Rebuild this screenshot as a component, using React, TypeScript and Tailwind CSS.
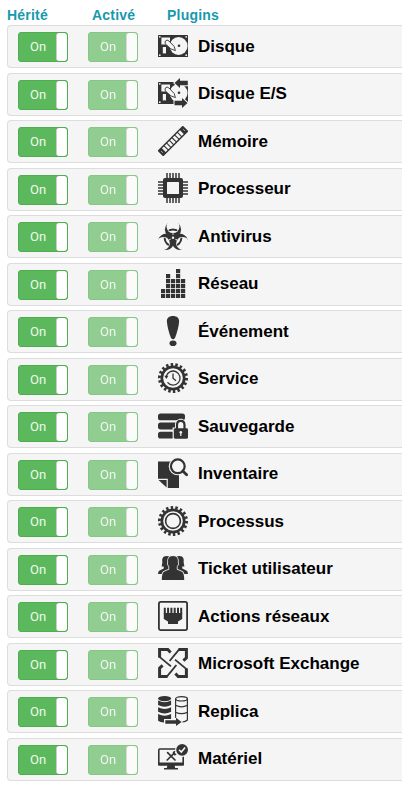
import type { ReactNode } from 'react'

const DARK = '#333'
const LIGHT = '#f5f5f5'

function Icon({ children }: { children: ReactNode }) {
  return (
    <svg viewBox="0 0 30 30" className="h-[30px] w-[30px]" fill={DARK}>
      {children}
    </svg>
  )
}

function DiskShape() {
  return (
    <>
      <rect y="4" width="30" height="22" rx="0.6" />
      <circle cx="20.6" cy="15" r="9" fill={LIGHT} />
      <path d="M3.4 6.4H12V9.5L9 13.5H3.4Z" fill={LIGHT} />
      <rect x="4.8" y="16" width="3.2" height="6.4" fill={LIGHT} />
      <path d="M7.2 10.2Q9 8 11 10L16.2 15.5L17.4 19.6L12.8 17.8L7.2 12.8Z" fill={LIGHT} stroke={DARK} strokeWidth="0.9" />
      <circle cx="21" cy="14.8" r="1.3" />
      <g fill={LIGHT}>
        <circle cx="1.8" cy="5.8" r="0.9" />
        <circle cx="28.2" cy="5.8" r="0.9" />
        <circle cx="1.8" cy="24.2" r="0.9" />
        <circle cx="28.2" cy="24.2" r="0.9" />
      </g>
    </>
  )
}

function DiskIcon() {
  return <Icon><DiskShape /></Icon>
}

function DiskIoIcon() {
  return (
    <Icon>
      <DiskShape />
      <path d="M16.5 5L22 0V2.8H29.8V7.2H22V10Z" stroke={LIGHT} strokeWidth="2" paintOrder="stroke" />
      <path d="M29.5 25L24 20V22.8H16.5V27.2H24V30Z" stroke={LIGHT} strokeWidth="2" paintOrder="stroke" />
    </Icon>
  )
}

function MemoryIcon() {
  return (
    <Icon>
      <g transform="rotate(-45 15 15)">
        <rect x="-2.8" y="11" width="35.6" height="8" rx="0.6" />
        {[2, 5.8, 9.6, 13.4, 17.2, 21, 24.8].map(x => (
          <rect key={x} x={x} y="12.4" width="2.7" height="5.2" fill={LIGHT} />
        ))}
        <path d="M-.5 14v2M30.5 14v2" stroke={LIGHT} strokeWidth="0.8" />
      </g>
    </Icon>
  )
}

function CpuIcon() {
  return (
    <Icon>
      <path d="M9 0V30M12 0V30M15 0V30M18 0V30M21 0V30M0 9H30M0 12H30M0 15H30M0 18H30M0 21H30" stroke={DARK} strokeWidth="1.5" />
      <rect x="5" y="5" width="20" height="20" rx="2" />
      <rect x="9" y="9" width="12" height="12" rx="0.5" fill={LIGHT} />
    </Icon>
  )
}

function BiohazardIcon() {
  const angles = [0, 120, 240]
  return (
    <Icon>
      <defs>
        <mask id="bio-horns" maskUnits="userSpaceOnUse" x="0" y="0" width="30" height="30">
          <rect width="30" height="30" fill="#fff" />
          {angles.map(a => (
            <g key={a} fill="#000" transform={`rotate(${a} 15 16.8)`}>
              <circle cx="15" cy="5.6" r="6.5" />
              <rect x="14.6" y="11.5" width="0.8" height="2.5" />
            </g>
          ))}
          <circle cx="15" cy="16.8" r="1.2" fill="#000" />
        </mask>
        <clipPath id="bio-ring">
          {angles.map(a => (
            <circle key={a} cx="15" cy="5.6" r="5.8" transform={`rotate(${a} 15 16.8)`} />
          ))}
        </clipPath>
      </defs>
      <g mask="url(#bio-horns)">
        {angles.map(a => (
          <circle key={a} cx="15" cy="8.6" r="8.1" transform={`rotate(${a} 15 16.8)`} />
        ))}
      </g>
      <circle cx="15" cy="16.8" r="8.4" fill="none" stroke={DARK} strokeWidth="2" clipPath="url(#bio-ring)" />
    </Icon>
  )
}

function NetworkIcon() {
  const columns = [2, 5, 4, 6, 4]
  return (
    <Icon>
      {columns.map((count, col) =>
        [...Array(count)].map((_, i) => (
          <rect key={`${col}-${i}`} x={3 + col * 5} y={26 - i * 5} width="4.2" height="4.2" />
        ))
      )}
    </Icon>
  )
}

function EventIcon() {
  return (
    <Icon>
      <path d="M15 0C19 0 21.3 2.2 21.1 5.5C20.9 10 19 17 17 22Q15 24.6 13 22C11 17 9.1 10 8.9 5.5C8.7 2.2 11 0 15 0Z" />
      <ellipse cx="15" cy="27.2" rx="3.5" ry="2.8" />
    </Icon>
  )
}

function GearShape() {
  return (
    <g fill="none" stroke={DARK}>
      <circle cx="15" cy="15" r="11.2" strokeWidth="2.7" />
      <circle cx="15" cy="15" r="13.4" strokeWidth="3.2" pathLength="36" strokeDasharray="1.05 .95" />
    </g>
  )
}

function ServiceIcon() {
  return (
    <Icon>
      <GearShape />
      <g fill="none" stroke={DARK} strokeWidth="1.3">
        <path d="M8.3 13.2A7 7 0 1 1 9.5 19.3" />
        <path d="M15 10.5V15.3L18 17.8" />
      </g>
      <path d="M6.3 12.8H10.4L8.4 16Z" />
    </Icon>
  )
}

function ProcessIcon() {
  return (
    <Icon>
      <GearShape />
      <circle cx="15" cy="15" r="7.4" fill="none" stroke={DARK} strokeWidth="1.6" />
    </Icon>
  )
}

function BackupIcon() {
  return (
    <Icon>
      <rect y="2.5" width="27" height="6.8" rx="2.6" />
      <rect y="11.6" width="27" height="6.8" rx="2.6" />
      <rect y="20.7" width="27" height="6.8" rx="2.6" />
      <path d="M14.6 28.5V16.5H17V14C17 5.5 28.5 5.5 28.5 14V16.5H31V28.5Z" fill={LIGHT} />
      <path d="M19 18V14C19 8.6 26.5 8.6 26.5 14V18" fill="none" stroke={DARK} strokeWidth="2.2" />
      <rect x="15.8" y="17.2" width="14.2" height="10.5" rx="1.4" />
      <circle cx="22.8" cy="21.2" r="1.3" fill={LIGHT} />
      <path d="M22.2 21H23.4V25H22.2Z" fill={LIGHT} />
    </Icon>
  )
}

function InventoryIcon() {
  return (
    <Icon>
      <path d="M0 3.5H21V30H9.8V20.8H0Z" />
      <path d="M0.5 22H8.6V29.6Z" />
      <circle cx="19.8" cy="8.3" r="9" fill={LIGHT} />
      <path d="M24 13L30 18.8" stroke={LIGHT} strokeWidth="5" />
      <circle cx="19.8" cy="8.3" r="6.9" fill={LIGHT} stroke={DARK} strokeWidth="2.2" />
      <path d="M24.8 13L28.6 16.8" stroke={DARK} strokeWidth="2.8" strokeLinecap="round" />
    </Icon>
  )
}

function UsersIcon() {
  return (
    <Icon>
      <path d="M8.5 3C4.7 3 3.8 6 4.4 9L3.6 13.6H5.7V15.6L1.6 17.4Q0 18.2 0 21H12V3.8Q10.5 3 8.5 3Z" />
      <path d="M21.5 3C25.3 3 26.2 6 25.6 9L26.4 13.6H24.3V15.6L28.4 17.4Q30 18.2 30 21H18V3.8Q19.5 3 21.5 3Z" />
      <path
        d="M15 3C10.4 3 9.7 6.4 10.2 9.2Q9.4 9.6 10 11.4Q10.3 12.8 11.2 13V16.5L6 18.8Q3.8 20 3.8 27H26.2Q26.2 20 24 18.8L18.8 16.5V13Q19.7 12.8 20 11.4Q20.6 9.6 19.8 9.2C20.3 6.4 19.6 3 15 3Z"
        stroke={LIGHT}
        strokeWidth="1.6"
        paintOrder="stroke"
      />
    </Icon>
  )
}

function EthernetIcon() {
  return (
    <Icon>
      <rect x="0.9" y="0.9" width="28.2" height="28.2" rx="1.8" fill="none" stroke={DARK} strokeWidth="1.8" />
      <path d="M5.8 12H24.2V18L20 20.5V23H10V20.5L5.8 18Z" />
      <path d="M6.8 6.8V13M10.1 6.8V13M13.4 6.8V13M16.7 6.8V13M20 6.8V13M23.2 6.8V13" stroke={DARK} strokeWidth="2" />
    </Icon>
  )
}

function ExchangeIcon() {
  return (
    <Icon>
      {[0, 90, 180, 270].map(angle => (
        <g key={angle} transform={`rotate(${angle} 15 15)`} fill="none" stroke={DARK}>
          <path d="M12.6 4.6L9.8 1.6H1.6V9.4" strokeWidth="3" />
          <path d="M0.9 8.4L13 18.4" strokeWidth="1.8" />
        </g>
      ))}
    </Icon>
  )
}

function ReplicaIcon() {
  return (
    <Icon>
      <ellipse cx="6.6" cy="2.6" rx="6.5" ry="2.6" />
      <path d="M.1 4.6Q6.6 8 13.1 4.6V9Q6.6 12.6.1 9Z" />
      <path d="M.1 11.2Q6.6 14.6 13.1 11.2V15.8Q6.6 19.4.1 15.8Z" />
      <path d="M.1 18Q6.6 21.4 13.1 18V23H6V26.6Q2 26.4.1 24.8Z" />
      <g fill="none" stroke={DARK} strokeWidth="1.2">
        <ellipse cx="23.5" cy="2.8" rx="5.9" ry="2.2" />
        <path d="M17.6 2.8V22M29.4 2.8V24Q27.5 25.8 24.5 26M17.6 9.3Q23.5 12.3 29.4 9.3M17.6 16.2Q23.5 19.2 29.4 16.2" />
      </g>
      <path d="M7.3 24.2H18V21.8L23.6 26L18 30V27.8H7.3Z" stroke={LIGHT} strokeWidth="1" paintOrder="stroke" />
    </Icon>
  )
}

function HardwareIcon() {
  return (
    <Icon>
      <rect x="0.8" y="6" width="24.4" height="15.8" rx="1" fill="none" stroke={DARK} strokeWidth="1.6" />
      <path d="M0 19.4H26V22.4H0ZM9.5 22H16.5L17.2 25H20V26.4H6V25H8.8Z" />
      <path d="M9.6 9.6L17 17M16.2 10.2L9.2 17" stroke={DARK} strokeWidth="1.7" strokeLinecap="round" />
      <path d="M14.6 9.6Q15.8 7.4 18 8L16.6 9.8L17.5 10.8L19.4 9.6Q19 12.4 16.2 12.4Z" />
      <circle cx="24" cy="7" r="7" fill={LIGHT} />
      <circle cx="24.1" cy="6.8" r="5.9" />
      <path d="M21.1 6.8L23.3 9L27.1 4.6" fill="none" stroke={LIGHT} strokeWidth="1.6" />
    </Icon>
  )
}

const plugins = [
  { name: 'Disque', icon: <DiskIcon /> },
  { name: 'Disque E/S', icon: <DiskIoIcon /> },
  { name: 'Mémoire', icon: <MemoryIcon /> },
  { name: 'Processeur', icon: <CpuIcon /> },
  { name: 'Antivirus', icon: <BiohazardIcon /> },
  { name: 'Réseau', icon: <NetworkIcon /> },
  { name: 'Événement', icon: <EventIcon /> },
  { name: 'Service', icon: <ServiceIcon /> },
  { name: 'Sauvegarde', icon: <BackupIcon /> },
  { name: 'Inventaire', icon: <InventoryIcon /> },
  { name: 'Processus', icon: <ProcessIcon /> },
  { name: 'Ticket utilisateur', icon: <UsersIcon /> },
  { name: 'Actions réseaux', icon: <EthernetIcon /> },
  { name: 'Microsoft Exchange', icon: <ExchangeIcon /> },
  { name: 'Replica', icon: <ReplicaIcon /> },
  { name: 'Matériel', icon: <HardwareIcon /> }
]

function Toggle({ disabled = false }: { disabled?: boolean }) {
  return (
    <button
      disabled={disabled}
      className={`flex h-[30px] w-[50px] shrink-0 overflow-hidden rounded-[3px] border border-[#4cae4c] bg-[#5cb85c]
        ${disabled ? 'opacity-65' : ''}`}
    >
      <span className="flex h-full w-[37px] items-center justify-center pl-px font-['Roboto',sans-serif] text-[13px] text-white/90">
        On
      </span>
      <span className="h-full w-[11px] rounded-[3px] border-l border-[#ccc] bg-white" />
    </button>
  )
}

export default function App() {
  return (
    <div className="h-[796px] w-[402px] overflow-hidden bg-white pl-[7px] font-['Liberation_Sans',Arial,sans-serif]">
      {/* Column titles */}
      <div className="flex h-[25px] pt-[5px] text-[14px] leading-[20px] font-bold tracking-[0.2px] text-[#1899ae]">
        <span className="w-[85px]">Hérité</span>
        <span className="w-[75px]">Activé</span>
        <span>Plugins</span>
      </div>

      {/* Plugin rows */}
      <div className="flex flex-col gap-[4.5px]">
        {plugins.map(plugin => (
          <div
            key={plugin.name}
            className="flex h-[43px] items-start rounded-l-[4px] border border-r-0 border-[#ddd] bg-[#f5f5f5] pt-[6px] pl-[10px]"
          >
            <Toggle />
            <div className="ml-5">
              <Toggle disabled />
            </div>
            <div className="-mt-[1.5px] ml-5 shrink-0">{plugin.icon}</div>
            <span className="-mt-[0.5px] ml-[10px] text-[17px] leading-[30px] font-bold whitespace-nowrap text-black">
              {plugin.name}
            </span>
          </div>
        ))}
      </div>
    </div>
  )
}
